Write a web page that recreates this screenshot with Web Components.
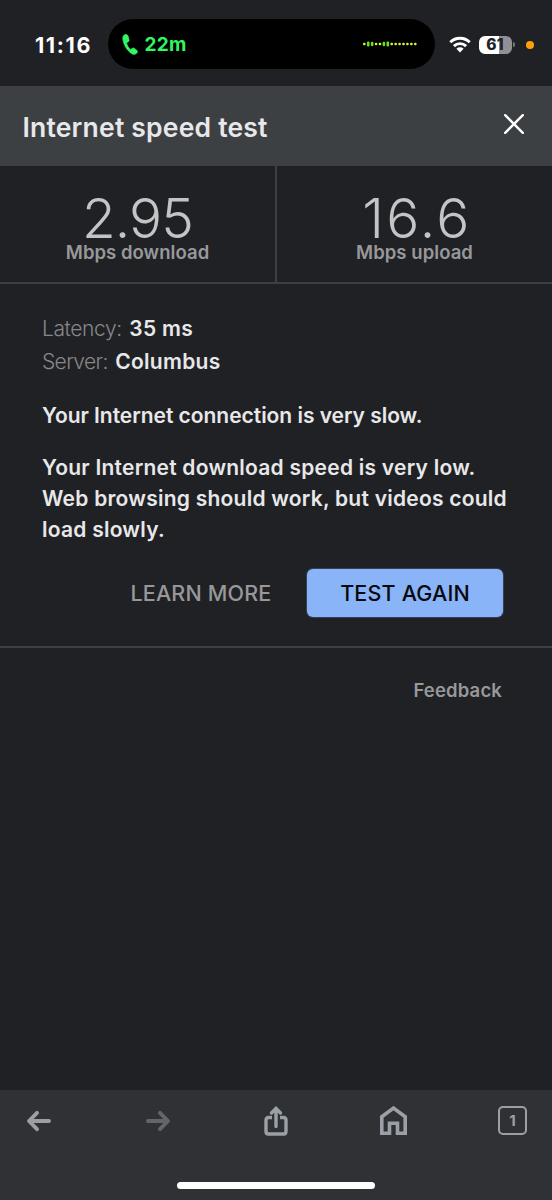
<!DOCTYPE html>
<html lang="en">
<head>
<meta charset="utf-8">
<meta name="viewport" content="width=device-width">
<title>Internet speed test</title>
<style>
html,body{margin:0;height:100%}
body{background:#202124;color:#e8e8ea;font-family:Inter,"Liberation Sans",sans-serif;overflow:hidden}
</style>
</head>
<body>
<speed-app></speed-app>
<script>
function define(name, style, html) {
  customElements.define(name, class extends HTMLElement {
    connectedCallback() {
      if (this.shadowRoot) return;
      this.attachShadow({ mode: 'open' }).innerHTML = '<style>' + style + '</style>' + html;
    }
  });
}

/* call level meter: taller bars are louder samples */
var LEVELS = [2.6, 5, 4.4, 2.6, 2.6, 4.4, 5, 2.6, 2.6, 2.6, 2.6, 2.6, 2.6, 2.6];
var METER = LEVELS.map(function (h, i) {
  return '<rect x="' + (i * 3.92) + '" y="' + (3 - h / 2) + '" width="2.6" height="' + h + '" rx="1.1" fill="' + (h > 3 ? '#6be01c' : '#d4f53c') + '"/>';
}).join('');

/* ============ status bar ============ */
define('status-bar', `:host{display:flex;align-items:center;height:86px;box-sizing:border-box;color:#fff}
svg{display:block;flex:none}
.time{width:108px;box-sizing:border-box;padding-left:35px;font-size:21.5px;font-weight:700;letter-spacing:1.6px;line-height:30px;margin-top:3px}
.island{display:flex;align-items:center;width:327px;height:50px;box-sizing:border-box;padding:0 17px 0 14px;border-radius:25px;background:#000;color:#30f764;margin-top:2px}
.call{font-size:19px;font-weight:700;line-height:26px;margin:1px 0 0 6.5px;flex:1;letter-spacing:.3px}
.wifi{margin:3px 0 0 14px}
.batt{display:flex;align-items:center;justify-content:center;width:33px;height:18px;margin:3px 0 0 7.5px;border-radius:6px;background:linear-gradient(90deg,#fff 62%,#919195 62%);color:#202124;font-size:15.5px;font-weight:800;line-height:18px;letter-spacing:.2px}
.nub{width:2px;height:5px;margin:3px 0 0 1px;border-radius:0 2px 2px 0;background:#77787b}
.mic{width:8px;height:8px;border-radius:50%;background:#ff9f0a;margin:3px 0 0 11.5px}`,
`<div class="time">11:16</div>
<div class="island">
  <svg width="16" height="21" viewBox="0 0 16 21"><path d="M2.6.7C1.100 1.500.6 3.200.9 5.400c.8 5.500 4.100 11 8.500 14 1.900 1.300 4.100 1.300 5.400-.3.9-1.100.8-2.200-.2-3l-2.300-1.700c-.8-.6-1.600-.5-2.300.1l-.9.7c-.4.3-.8.3-1.200-.1C6.400 13.400 5.300 11.500 4.700 9.600c-.2-.6 0-.9.500-1.200l.9-.5c.9-.5 1.100-1.200.9-2.100L6.300 2.700C5.900.7 4.200-.1 2.600.7z" fill="currentColor" stroke="currentColor" stroke-width=".7"/></svg>
  <span class="call">22m</span>
  <svg width="55" height="6" viewBox="0 0 55 6">${METER}</svg>
</div>
<svg class="wifi" width="22" height="17" viewBox="0 0 22 17"><g fill="none" stroke="#fff" stroke-width="2.900"><path d="M1.300 6.300a13.800 13.800 0 0 1 19.400 0"/><path d="M4.900 10.100a8.700 8.700 0 0 1 12.200 0"/></g><path d="M7.400 12.700a5.200 5.200 0 0 1 7.200 0L11 16.500z" fill="#fff"/></svg>
<div class="batt">61</div><i class="nub"></i><i class="mic"></i>`);

/* ============ dialog header ============ */
define('dialog-header', `:host{display:flex;align-items:center;justify-content:space-between;height:80px;box-sizing:border-box;padding:0 28px 0 22.5px;background:#3c4043;color:#e8e8ea}
h1{margin:1px 0 0;font-size:26.500px;font-weight:600;line-height:36px;white-space:nowrap;letter-spacing:.2px}
svg{display:block;margin-top:-4px}`,
`<h1><slot></slot></h1>
<svg width="20" height="20" viewBox="0 0 20 20"><path d="M1.200 1.200l17.600 17.600M18.800 1.200L1.200 18.800" stroke="#fff" stroke-width="2.400" stroke-linecap="round"/></svg>`);

/* ============ one measured speed ============ */
define('speed-stat', `:host{display:flex;flex-direction:column;align-items:center;flex:1;padding-top:28px}
.value{font-size:55px;font-weight:300;line-height:48px;color:#c4c4c7;letter-spacing:var(--track,-.9px);padding-left:var(--lead,0);white-space:nowrap}
.unit{font-size:18.500px;font-weight:600;line-height:24px;color:#98989b;margin-top:-2px;letter-spacing:.05px;white-space:nowrap}`,
`<div class="value"><slot></slot></div><div class="unit"><slot name="unit"></slot></div>`);

/* ============ latency / server line ============ */
define('info-line', `:host{display:block;font-size:21px;line-height:32.500px;white-space:nowrap}
.k{color:#87878a;font-weight:300;letter-spacing:var(--ktrack,-.4px)}
.v{font-weight:600;margin-left:7.5px;letter-spacing:.3px}`,
`<span class="k"><slot name="label"></slot></span><span class="v"><slot></slot></span>`);

define('action-button', `:host{display:flex;align-items:center;justify-content:center;height:48px;font-size:21.500px;font-weight:500;letter-spacing:.17px;color:#98989b;white-space:nowrap}
:host([primary]){width:196px;border-radius:6px;background:#8ab4f8;color:#08090c;box-shadow:0 0 0 1px #344056}`,
`<slot></slot>`);

/* ============ browser toolbar ============ */
define('browser-toolbar', `:host{display:flex;flex-direction:column;align-items:center;height:110px;background:#303134;color:#9aa0a6}
nav{display:flex;align-items:center;justify-content:space-between;align-self:stretch;height:62px;padding:0 25px 0 26px;box-sizing:border-box}
svg{display:block;fill:none;stroke:currentColor}
.off{opacity:.48;margin-left:2px}
.share{margin-left:2px}
.house{margin-left:2px}
.tabs{display:flex;align-items:center;justify-content:center;box-sizing:border-box;width:29px;height:29px;margin-bottom:2px;border:2px solid;border-radius:5px;font-size:15px;font-weight:700}
.home{width:198px;height:7px;margin-top:30px;border-radius:4px;background:#fff}`,
`<nav>
  <svg width="26" height="22" viewBox="0 0 26 22" stroke-width="3.900" stroke-linecap="round" stroke-linejoin="round"><path d="M11 2.800L3 11l8 8.200M3.500 11H23"/></svg>
  <svg class="off" width="26" height="22" viewBox="0 0 26 22" stroke-width="3.900" stroke-linecap="round" stroke-linejoin="round"><path d="M15 2.800L23 11l-8 8.200M22.500 11H3"/></svg>
  <svg class="share" width="24" height="32" viewBox="0 0 24 32" stroke-width="3.400"><path d="M8 12.500H4.500Q2 12.500 2 15V26.500Q2 29 4.500 29H19.500Q22 29 22 26.500V15Q22 12.500 19.500 12.500H16"/><path d="M12 21.500V4M7.500 8L12 3.500 16.500 8" stroke-linecap="round"/></svg>
  <svg class="house" width="27" height="30" viewBox="0 0 27 30" stroke-width="3.600"><path d="M1.800 27.300V10.700L13.500 2.100l11.700 8.600V27.300H17.500V17.300H9.500V27.300z"/></svg>
  <div class="tabs">1</div>
</nav>
<div class="home"></div>`);

/* ============ page ============ */
define('speed-app', `:host{display:flex;flex-direction:column;height:1200px}
.stats{display:flex;height:116px;border-bottom:2px solid #3c4043}
.stats speed-stat+speed-stat{--track:2.3px;--lead:5px;border-left:2px solid #3c4043}
.result{height:364px;box-sizing:border-box;padding:29px 42px 0;border-bottom:2px solid #3c4043}
info-line+info-line{--ktrack:-.65px}
p{margin:0;font-size:21px;font-weight:600;line-height:31px;white-space:nowrap}
.sum{margin-top:22px;letter-spacing:-.03px}
.detail{margin-top:21px;letter-spacing:.24px}
.actions{display:flex;justify-content:flex-end;gap:35.5px;margin:24px 7px 0 0}
.feedback{flex:1;text-align:right;padding:30px 50px 0 0;font-size:18.500px;font-weight:600;letter-spacing:.15px;line-height:24px;color:#98989b}`,
`<status-bar></status-bar>
<dialog-header>Internet speed test</dialog-header>
<div class="stats">
  <speed-stat>2.95<span slot="unit">Mbps download</span></speed-stat>
  <speed-stat>16.6<span slot="unit">Mbps upload</span></speed-stat>
</div>
<div class="result">
  <info-line><span slot="label">Latency:</span>35 ms</info-line>
  <info-line><span slot="label">Server:</span>Columbus</info-line>
  <p class="sum">Your Internet connection is very slow.</p>
  <p class="detail">Your Internet download speed is very low.<br>Web browsing should work, but videos could<br>load slowly.</p>
  <div class="actions"><action-button>LEARN MORE</action-button><action-button primary>TEST AGAIN</action-button></div>
</div>
<div class="feedback">Feedback</div>
<browser-toolbar></browser-toolbar>`);
</script>
</body>
</html>
